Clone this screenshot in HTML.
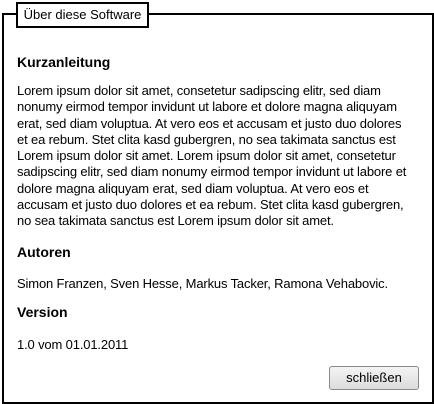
<!DOCTYPE html>
<html><head><meta charset="utf-8"><style>
html,body{margin:0;padding:0;background:#fff;width:434px;height:404px;overflow:hidden}
body{position:relative;font-family:"Liberation Sans",Arial,sans-serif;font-size:13px;color:#000}
.frame{position:absolute;left:2px;top:13px;width:428px;height:387px;border:2px solid #000}
.title{position:absolute;left:16px;top:2px;width:129px;height:22px;border:2px solid #000;background:#fff;line-height:22px;text-align:center;font-size:13px}
.l{position:absolute;left:17px;white-space:nowrap;line-height:16px;letter-spacing:-0.15px}
h{position:absolute;left:17px;font-weight:bold;font-size:14px;white-space:nowrap}
.btn{position:absolute;left:329px;top:366px;width:88px;height:22px;border:1px solid #8a8a8a;border-radius:3px;background:linear-gradient(#f4f4f4,#dcdcdc);text-align:center;line-height:22px;font-size:13px}
</style></head><body>
<div class="frame"></div>
<div class="title">Über diese Software</div>
<h style="top:54px">Kurzanleitung</h>
<div class="l" style="top:83px">Lorem ipsum dolor sit amet, consetetur sadipscing elitr, sed diam</div>
<div class="l" style="top:99.25px">nonumy eirmod tempor invidunt ut labore et dolore magna aliquyam</div>
<div class="l" style="top:115.5px">erat, sed diam voluptua. At vero eos et accusam et justo duo dolores</div>
<div class="l" style="top:131.75px">et ea rebum. Stet clita kasd gubergren, no sea takimata sanctus est</div>
<div class="l" style="top:148px">Lorem ipsum dolor sit amet. Lorem ipsum dolor sit amet, consetetur</div>
<div class="l" style="top:164.25px">sadipscing elitr, sed diam nonumy eirmod tempor invidunt ut labore et</div>
<div class="l" style="top:180.5px">dolore magna aliquyam erat, sed diam voluptua. At vero eos et</div>
<div class="l" style="top:196.75px">accusam et justo duo dolores et ea rebum. Stet clita kasd gubergren,</div>
<div class="l" style="top:213px">no sea takimata sanctus est Lorem ipsum dolor sit amet.</div>
<h style="top:244px">Autoren</h>
<div class="l" style="top:276px">Simon Franzen, Sven Hesse, Markus Tacker, Ramona Vehabovic.</div>
<h style="top:304px">Version</h>
<div class="l" style="top:337px">1.0 vom 01.01.2011</div>
<div class="btn">schließen</div>
</body></html>
